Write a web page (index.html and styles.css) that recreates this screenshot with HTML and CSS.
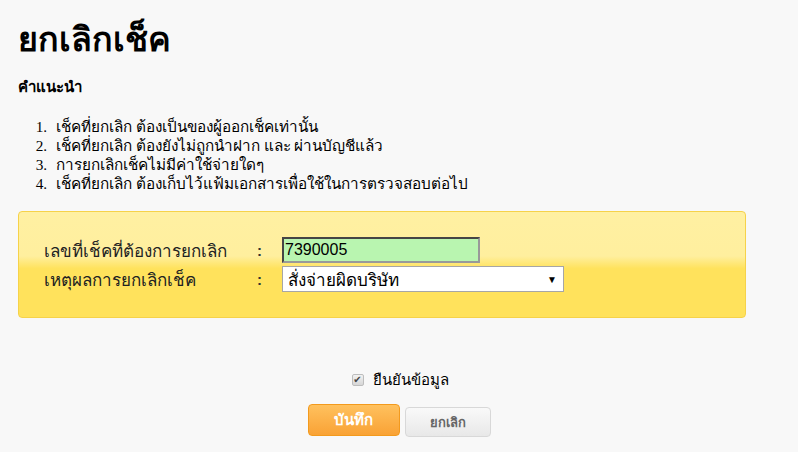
FILE: index.html
```html
<!DOCTYPE html>
<html lang="th">
<head>
  <meta charset="UTF-8" />
  <title>ยกเลิกเช็ค</title>
  <link rel="stylesheet" href="styles.css">
</head>
<body>
  <h1 class="title">ยกเลิกเช็ค</h1>

  <h4 class="subtitle">คำแนะนำ</h4>
  <ol class="hints">
    <li>เช็คที่ยกเลิก ต้องเป็นของผู้ออกเช็คเท่านั้น</li>
    <li>เช็คที่ยกเลิก ต้องยังไม่ถูกนำฝาก และ ผ่านบัญชีแล้ว</li>
    <li>การยกเลิกเช็คไม่มีค่าใช้จ่ายใดๆ</li>
    <li>เช็คที่ยกเลิก ต้องเก็บไว้แฟ้มเอกสารเพื่อใช้ในการตรวจสอบต่อไป</li>
  </ol>

  <div class="panel">
    <div class="row">
      <span class="label">เลขที่เช็คที่ต้องการยกเลิก</span>
      <span class="colon">:</span>
      <input class="cheque" type="text" value="7390005" />
    </div>
    <div class="row">
      <span class="label">เหตุผลการยกเลิกเช็ค</span>
      <span class="colon">:</span>
      <div class="select">
        <span>สั่งจ่ายผิดบริษัท</span>
        <span class="arrow">▼</span>
      </div>
    </div>
  </div>

  <div class="confirm">
    <span class="check">✔</span>
    <span>ยืนยันข้อมูล</span>
  </div>

  <div class="actions">
    <button class="btn-save">บันทึก</button>
    <button class="btn-cancel">ยกเลิก</button>
  </div>
</body>
</html>
```

FILE: styles.css
```css
* { box-sizing: border-box; }
body {
  margin: 0;
  padding: 0 18px;
  background-color: #f8f8f8;
  color: #000;
  font-family: "Liberation Serif", "DejaVu Sans", serif;
}
.title {
  font-family: "Liberation Sans", "DejaVu Sans", sans-serif;
  font-size: 34px;
  margin: 19px 0 0;
  line-height: 40px;
}
.subtitle {
  font-family: "Liberation Sans", "DejaVu Sans", sans-serif;
  font-size: 15px;
  margin: 18px 0 0;
  line-height: 20px;
}
.hints {
  margin: 20px 0 0;
  padding-left: 33px;
  font-size: 15.3px;
  line-height: 19px;
}
.hints li { padding-left: 5px; }
.panel {
  margin: 18px 34px 0 0;
  height: 107px;
  border: 1px solid #f6d24a;
  border-radius: 4px;
  background: linear-gradient(#fff0a2 0%, #ffef9e 42%, #ffe25c 54%, #ffe25c 100%);
  padding: 25px 0 0 25px;
  font-family: "Liberation Sans", "DejaVu Sans", sans-serif;
  font-size: 17px;
}
.row {
  display: flex;
  align-items: center;
  height: 26px;
  margin-bottom: 3px;
}
.label {
  width: 213px;
  color: #222;
}
.colon {
  width: 25px;
  font-weight: bold;
  font-size: 15px;
  color: #333;
}
.cheque {
  width: 198px;
  height: 26px;
  border: 2px inset #999;
  background: #b9f5b0;
  font: 16px "Liberation Sans", "DejaVu Sans", sans-serif;
  padding: 0 1px;
}
.select {
  width: 282px;
  height: 26px;
  background: #fff;
  border: 1px solid #a6a6a6;
  display: flex;
  align-items: center;
  justify-content: space-between;
  padding: 0 6px 0 5px;
  font-size: 17px;
}
.arrow { font-size: 10px; }
.confirm {
  margin-top: 50px;
  display: flex;
  justify-content: center;
  align-items: center;
  gap: 9px;
  font-family: "Liberation Sans", "DejaVu Sans", sans-serif;
  font-size: 15px;
  padding-left: 2px;
}
.check {
  width: 12px;
  height: 12px;
  border: 1px solid #bdbdbd;
  border-radius: 2px;
  background: linear-gradient(#f2f2f2, #d6d6d6);
  color: #444;
  font-size: 10px;
  line-height: 10px;
  text-align: center;
}
.actions {
  margin-top: 12px;
  display: flex;
  justify-content: center;
  gap: 5px;
}
.actions button {
  font-family: "Liberation Sans", "DejaVu Sans", sans-serif;
  font-weight: bold;
  cursor: pointer;
  border-radius: 4px;
}
.btn-save {
  width: 92px;
  height: 32px;
  border: 1px solid #f39a1d;
  background: linear-gradient(#ffc15e, #f9a235);
  color: #fff;
  font-size: 15px;
}
.btn-cancel {
  width: 86px;
  height: 30px;
  margin-top: 3px;
  border: 1px solid #d8d8d8;
  background: linear-gradient(#f9f9f9, #e8e8e8);
  color: #666;
  font-size: 13px;
}
```
